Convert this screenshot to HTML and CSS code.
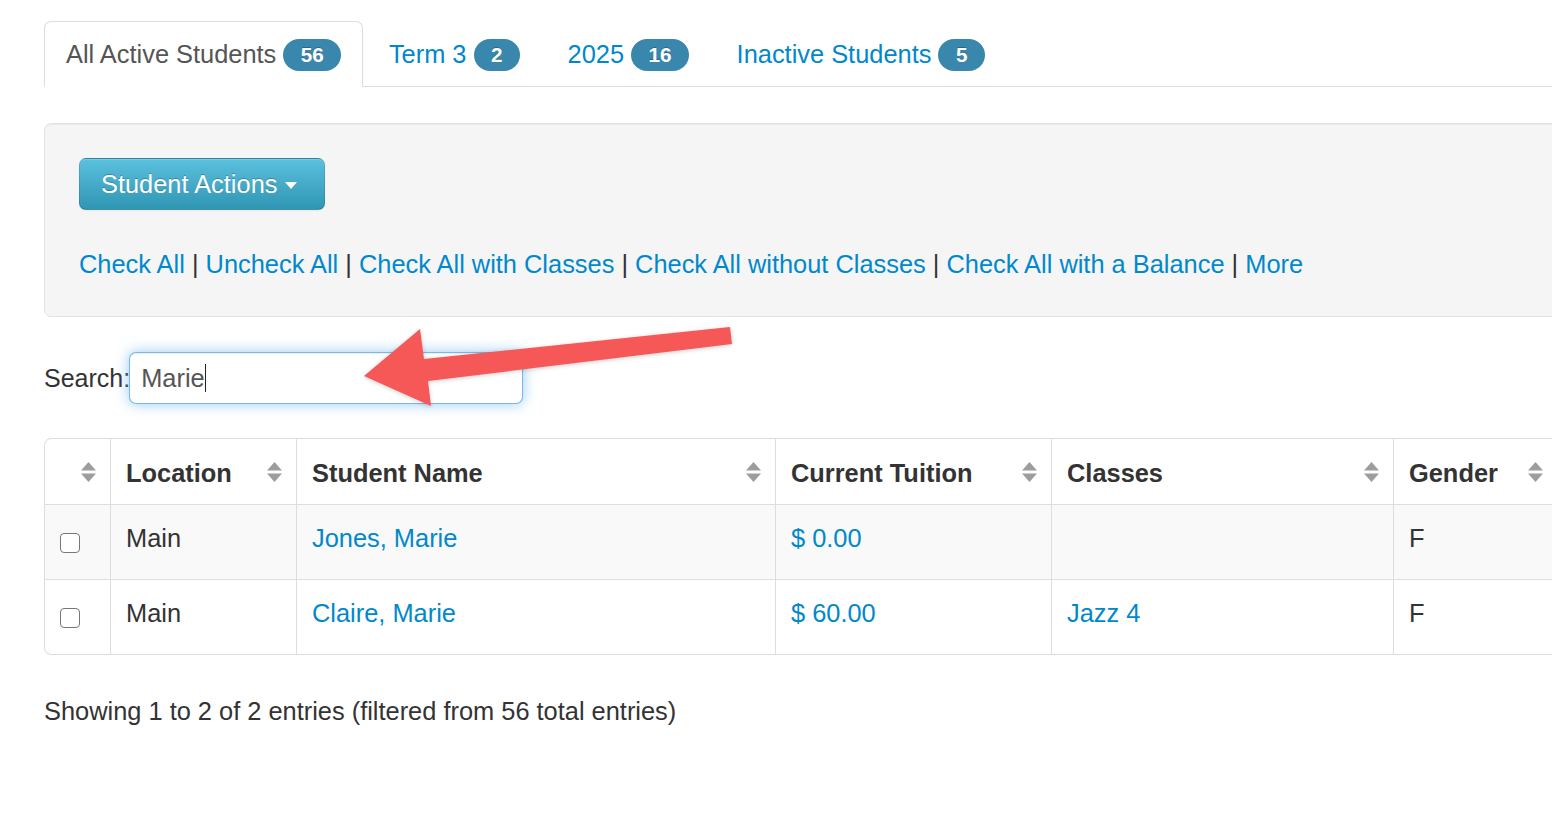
FILE: index.html
```html
<!DOCTYPE html>
<html lang="en">
<head>
<meta charset="utf-8">
<title>Students</title>
<link rel="stylesheet" href="styles.css">
</head>
<body>
<div class="page">
  <ul class="tabs">
    <li class="tab active"><a href="#">All Active Students <span class="badge">56</span></a></li>
    <li class="tab"><a href="#">Term 3 <span class="badge">2</span></a></li>
    <li class="tab"><a href="#">2025 <span class="badge">16</span></a></li>
    <li class="tab"><a href="#">Inactive Students <span class="badge">5</span></a></li>
  </ul>

  <div class="well">
    <button class="btn-info" type="button">Student Actions <span class="caret"></span></button>
    <div class="check-links">
      <a href="#">Check All</a> | <a href="#">Uncheck All</a> | <a href="#">Check All with Classes</a> | <a href="#">Check All without Classes</a> | <a href="#">Check All with a Balance</a> | <a href="#">More</a>
    </div>
  </div>

  <div class="search-row">
    <label class="search-label">Search:</label>
    <div class="search-input">Marie<span class="cursor"></span></div>
  </div>

  <table class="data-table">
    <thead>
      <tr>
        <th class="c1"><div class="th-in th-end"><svg class="sort" viewBox="0 0 15 20"><path d="M0 8.5 L7.5 0 L15 8.5 Z M0 11.5 L15 11.5 L7.5 20 Z"/></svg></div></th>
        <th class="c2"><div class="th-in"><span>Location</span><svg class="sort" viewBox="0 0 15 20"><path d="M0 8.5 L7.5 0 L15 8.5 Z M0 11.5 L15 11.5 L7.5 20 Z"/></svg></div></th>
        <th class="c3"><div class="th-in"><span>Student Name</span><svg class="sort" viewBox="0 0 15 20"><path d="M0 8.5 L7.5 0 L15 8.5 Z M0 11.5 L15 11.5 L7.5 20 Z"/></svg></div></th>
        <th class="c4"><div class="th-in"><span>Current Tuition</span><svg class="sort" viewBox="0 0 15 20"><path d="M0 8.5 L7.5 0 L15 8.5 Z M0 11.5 L15 11.5 L7.5 20 Z"/></svg></div></th>
        <th class="c5"><div class="th-in"><span>Classes</span><svg class="sort" viewBox="0 0 15 20"><path d="M0 8.5 L7.5 0 L15 8.5 Z M0 11.5 L15 11.5 L7.5 20 Z"/></svg></div></th>
        <th class="c6"><div class="th-in"><span>Gender</span><svg class="sort" viewBox="0 0 15 20"><path d="M0 8.5 L7.5 0 L15 8.5 Z M0 11.5 L15 11.5 L7.5 20 Z"/></svg></div></th>
      </tr>
    </thead>
    <tbody>
      <tr class="odd">
        <td><input class="cb" type="checkbox"></td>
        <td>Main</td>
        <td><a href="#">Jones, Marie</a></td>
        <td><a href="#">$ 0.00</a></td>
        <td></td>
        <td>F</td>
      </tr>
      <tr>
        <td><input class="cb" type="checkbox"></td>
        <td>Main</td>
        <td><a href="#">Claire, Marie</a></td>
        <td><a href="#">$ 60.00</a></td>
        <td><a href="#">Jazz 4</a></td>
        <td>F</td>
      </tr>
    </tbody>
  </table>

  <div class="info">Showing 1 to 2 of 2 entries (filtered from 56 total entries)</div>
</div>

<svg class="annotation" viewBox="0 0 1552 824" width="1552" height="824">
  <polygon class="arrow" points="730,327 732,344 428,381 431,406 364,376 420,329 424,359"/>
</svg>
</body>
</html>
```

FILE: styles.css
```css
html, body {
  margin: 0;
  padding: 0;
  background: #fff;
  overflow: hidden;
}

body {
  font-family: "Liberation Sans", Helvetica, Arial, sans-serif;
  font-size: 25.4px;
  line-height: 35px;
  color: #333;
  width: 1552px;
  height: 824px;
  position: relative;
}

a {
  color: #0088cc;
  text-decoration: none;
}

.page {
  margin-left: 44px;
  width: 1560px;
}

/* Tabs */
.tabs {
  list-style: none;
  margin: 21px 0 0 0;
  padding: 0;
  display: flex;
  border-bottom: 1px solid #ddd;
}

.tab {
  margin-bottom: -1px;
  margin-right: 3.5px;
}

.tab a {
  display: block;
  padding: 14.5px 21px 14.5px 21px;
  border: 1px solid transparent;
  border-radius: 7px 7px 0 0;
  line-height: 35px;
  white-space: nowrap;
}

.tab.active a {
  color: #555;
  background: #fff;
  border-color: #ddd;
  border-bottom-color: transparent;
}

.badge {
  display: inline-block;
  background: #3a87ad;
  color: #fff;
  font-weight: bold;
  font-size: 20.7px;
  line-height: 24.5px;
  padding: 3.5px 17.5px;
  border-radius: 16px;
  text-shadow: 0 -1px 0 rgba(0, 0, 0, 0.25);
  vertical-align: 1px;
}

/* Well */
.well {
  margin-top: 36px;
  padding: 34px;
  background: #f5f5f5;
  border: 1px solid #e3e3e3;
  border-radius: 7px;
  box-shadow: inset 0 1px 1px rgba(0, 0, 0, 0.05);
}

.btn-info {
  display: inline-flex;
  align-items: center;
  height: 52px;
  box-sizing: border-box;
  padding: 0 27px 0 21px;
  font-family: inherit;
  font-size: 25.4px;
  color: #fff;
  text-shadow: 0 -1px 0 rgba(0, 0, 0, 0.25);
  background: linear-gradient(to bottom, #5bc0de, #2f96b4);
  border: 1px solid #2a87a3;
  border-color: rgba(0, 0, 0, 0.1) rgba(0, 0, 0, 0.1) rgba(0, 0, 0, 0.25);
  border-radius: 7px;
  box-shadow: inset 0 1px 0 rgba(255, 255, 255, 0.2), 0 1px 2px rgba(0, 0, 0, 0.05);
  cursor: pointer;
}

.caret {
  display: inline-block;
  width: 0;
  height: 0;
  margin-left: 8px;
  border-top: 7px solid #fff;
  border-left: 6.5px solid transparent;
  border-right: 6.5px solid transparent;
  margin-top: 2px;
}

.check-links {
  margin-top: 36px;
  line-height: 36px;
  white-space: nowrap;
}

/* Search */
.search-row {
  margin-top: 35px;
  display: flex;
  align-items: center;
}

.search-label {
  font-size: 25px;
}

.search-input {
  box-sizing: border-box;
  width: 394px;
  height: 52px;
  padding: 0 11px;
  margin-left: -1px;
  display: flex;
  align-items: center;
  font-size: 25.4px;
  color: #555;
  background: #fff;
  border: 1px solid rgba(82, 168, 236, 0.8);
  border-radius: 7px;
  box-shadow: inset 0 1px 1px rgba(0, 0, 0, 0.075), 0 0 14px rgba(82, 168, 236, 0.6);
}

.cursor {
  display: inline-block;
  width: 1.5px;
  height: 28px;
  background: #222;
  margin-left: 0;
}

/* Table */
.data-table {
  margin-top: 34px;
  border-collapse: separate;
  border-spacing: 0;
  table-layout: fixed;
  width: 1549px;
  border: 1px solid #ddd;
  border-left: 0;
  border-radius: 7px 0 0 7px;
}

.data-table th,
.data-table td {
  box-sizing: border-box;
  border-left: 1px solid #ddd;
  text-align: left;
  vertical-align: middle;
  line-height: 35px;
  white-space: nowrap;
}

.data-table th {
  height: 65px;
  padding: 4px 14px 0 15px;
  font-weight: bold;
  color: #333;
}

.data-table td {
  height: 75px;
  padding: 0 15px 7px 15px;
  border-top: 1px solid #ddd;
}

.data-table th:first-child {
  border-top-left-radius: 7px;
}

.data-table tr:last-child td:first-child {
  border-bottom-left-radius: 7px;
}

.data-table tbody tr.odd td {
  background: #f9f9f9;
}

.c1 { width: 66px; }
.c2 { width: 186px; }
.c3 { width: 479px; }
.c4 { width: 276px; }
.c5 { width: 342px; }
.c6 { width: 200px; }

.th-in {
  display: flex;
  align-items: center;
  justify-content: space-between;
}

.th-end {
  justify-content: flex-end;
}

.sort {
  width: 15px;
  height: 20px;
  fill: #9d9d9d;
  flex: none;
  margin-top: -3px;
}

.data-table th.c6 .th-in {
  justify-content: flex-start;
}

.data-table th.c6 .sort {
  margin-left: 30px;
}

.cb {
  -webkit-appearance: none;
  appearance: none;
  width: 20px;
  height: 20px;
  margin: 9px 0 0 0;
  box-sizing: border-box;
  border: 1.5px solid #777;
  border-radius: 4px;
  background: #fff;
  display: block;
}

.info {
  margin-top: 39px;
  line-height: 35px;
}

/* Annotation overlay */
.annotation {
  position: absolute;
  left: 0;
  top: 0;
  pointer-events: none;
}

.arrow {
  fill: #f65757;
  filter: drop-shadow(0 1px 2px rgba(0, 0, 0, 0.2));
}
```
